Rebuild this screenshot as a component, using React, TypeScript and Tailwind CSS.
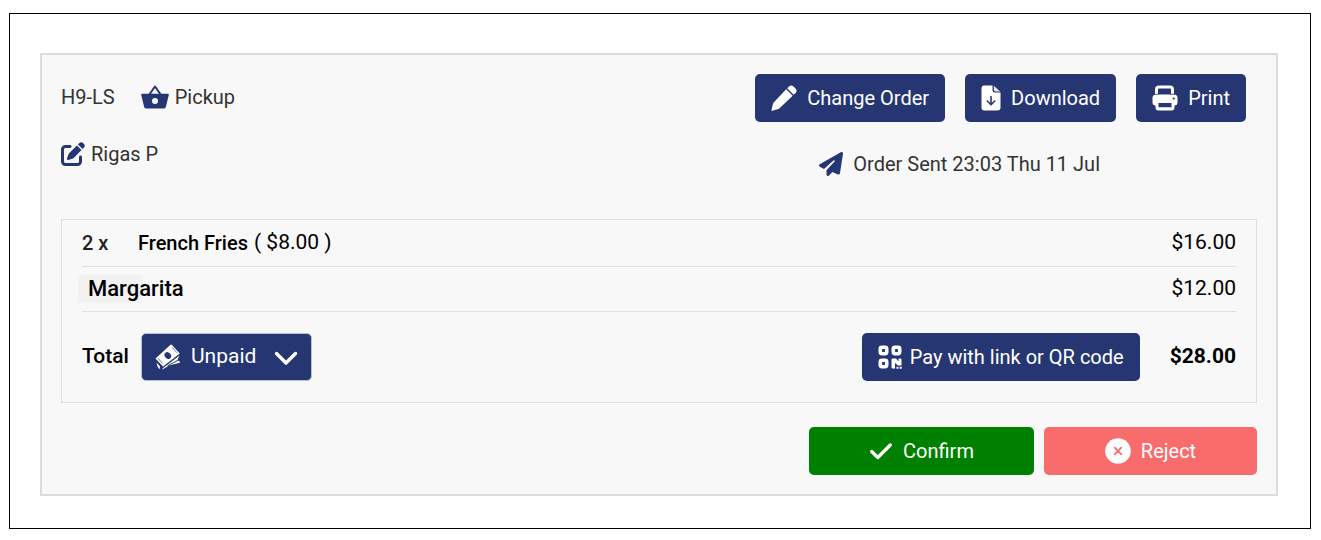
import type { ButtonHTMLAttributes } from "react";
import { FaPaperPlane, FaPenToSquare } from "react-icons/fa6";

function ActionButton({ className = "", ...rest }: ButtonHTMLAttributes<HTMLButtonElement>) {
  return (
    <button
      type="button"
      className={`flex h-12 items-center rounded-[5px] ${className}`}
      {...rest}
    />
  );
}

function BasketIcon() {
  return (
    <svg viewBox="0 0 28 24" className="h-6 w-7" aria-hidden="true">
      <path fill="none" stroke="#263672" strokeWidth="2" strokeLinejoin="round" d="M8 10 14 1.500 20 10" />
      <path
        fill="#263672"
        fillRule="evenodd"
        d="M1.200 8.700h25.600q1.200 0 1 1.200l-3 12q-.4 1.600-2 1.600H5.200q-1.600 0-2-1.600l-3-12q-.2-1.200 1-1.200ZM14 13.100a3 3 0 1 0 0 6 3 3 0 0 0 0-6Z"
      />
    </svg>
  );
}

function PencilIcon() {
  return (
    <svg viewBox="0 0 26 26" className="size-[26px]" aria-hidden="true">
      <path fill="#fff" d="M15.200 4.300 21.700 10.800 8.500 23.200Q8 23.700 7.300 23.900L1.400 25.700Q.2 26 .5 24.700L2 18.700Q2.200 18 2.700 17.500Z" />
      <path fill="#fff" d="M16.200 3.300 18 1.500Q20.200-.4 22.400 1.500L24.500 3.600Q26.600 5.900 24.600 8L22.700 9.800Z" />
    </svg>
  );
}

function DownloadIcon() {
  return (
    <svg viewBox="0 0 20 26" className="h-[26px] w-5" aria-hidden="true">
      <path fill="#fff" d="M3 .5h8.500V5q0 2.500 2.500 2.500h5.500V22.500q0 3-3 3H3.500q-3 0-3-3V3.500q0-3 2.500-3Z" />
      <path fill="#e9e4f0" d="M12.800.8 19.200 6.400H14.500q-1.700 0-1.700-1.700Z" />
      <path fill="none" stroke="#263672" strokeWidth="1.600" strokeLinecap="round" strokeLinejoin="round" d="M10 11.500v8M6.300 16 10 19.700 13.700 16" />
    </svg>
  );
}

function PrintIcon() {
  return (
    <svg viewBox="0 0 26 26" className="size-[26px]" aria-hidden="true">
      <path fill="none" stroke="#fff" strokeWidth="3" d="M4.500 10V4.500q0-2.500 2.500-2.500h11q2.500 0 2.500 2.500V10" />
      <path
        fill="#fff"
        fillRule="evenodd"
        d="M4 9.500h18q3.500 0 3.500 3.500v4.500q0 3-3 3v2q0 3-3 3h-13q-3 0-3-3v-2q-3 0-3-3V13q0-3.500 3.500-3.500ZM6.500 18v4.200h13V18ZM21.700 12.500a1.100 1.100 0 1 0 0 2.200 1.100 1.100 0 0 0 0-2.200Z"
      />
      <path stroke="#263672" strokeWidth=".8" d="M2.500 9.300h4M18.500 9.300h4" />
    </svg>
  );
}

function CashIcon() {
  return (
    <svg viewBox="0 0 26 26" className="size-[26px]" aria-hidden="true">
      <path fill="#fff" d="M.5 14.500 15.500.8Q16.300.2 17 1L24.800 9.500 8 22.500Z" />
      <path fill="#fff" d="M1.500 18.500 5 22.500 4.500 25.500 2.500 22.500ZM7.500 24.500 24.500 11.500 22.500 15.500 25.500 18.500 14 21.500 7.500 25.500Z" />
      <path stroke="#263672" strokeWidth="1" d="M12.500 21.800 24 15.800" />
      <ellipse cx="12.800" cy="11.500" rx="3" ry="3.600" transform="rotate(-42 12.800 11.500)" fill="#263672" />
      <path fill="none" stroke="#263672" strokeWidth=".7" d="M3 14.200 7.500 19.500M17.200 3.500 22 8.800" />
    </svg>
  );
}

function QrIcon() {
  return (
    <svg viewBox="0 0 24 24" className="size-6" aria-hidden="true">
      <g fill="none" stroke="#fff" strokeWidth="3.600">
        <rect x="2.300" y="2.300" width="6.400" height="6.400" rx="1.600" />
        <rect x="15.300" y="2.300" width="6.400" height="6.400" rx="1.600" />
        <rect x="2.300" y="15.300" width="6.400" height="6.400" rx="1.600" />
      </g>
      <path fill="#fff" d="M13.500 14.500q0-1 1-1h3.500l2.500 3v-3h2q1 0 1 1v6h-3.500l-3-2.500v5.500h-2.500q-1 0-1-1ZM18.500 21.700h2v2h-2ZM21.700 21.700h2v2h-2Z" />
    </svg>
  );
}

function ChevronIcon() {
  return (
    <svg viewBox="0 0 24 24" className="ml-2 size-6" aria-hidden="true">
      <path fill="none" stroke="#fff" strokeWidth="3.400" strokeLinecap="round" strokeLinejoin="round" d="M2.500 8.500 12 18 21.500 8.500" />
    </svg>
  );
}

function CheckIcon() {
  return (
    <svg viewBox="0 0 24 24" className="size-6" aria-hidden="true">
      <path fill="none" stroke="#fff" strokeWidth="3.300" strokeLinecap="round" strokeLinejoin="round" d="M2.700 12.500 8.800 18.500 21.300 6" />
    </svg>
  );
}

function RejectIcon() {
  return (
    <svg viewBox="0 0 26 26" className="size-[26px]" aria-hidden="true">
      <circle cx="13" cy="13" r="12.800" fill="#fff" />
      <path stroke="#f86c6b" strokeWidth="1.700" strokeLinecap="round" d="m9.700 9.700 6.600 6.600m0-6.600-6.600 6.600" />
    </svg>
  );
}

export default function App() {
  return (
    <div className="bg-white pt-[13px] pr-[10px] pb-[11px] pl-[9px] font-['Roboto',sans-serif] text-xl text-black">
      <main className="border border-black pt-[39px] pr-8 pb-8 pl-[30px]">
        <article className="border-2 border-[#dcdcde] bg-[#f8f8f8] p-[19px]">
          <header className="flex items-start justify-between pr-[11px] text-[#333]">
            <div className="flex flex-col gap-[27px] pt-2">
              <div className="flex items-center gap-[26px] leading-[30px]">
                <span>H9-LS</span>
                <span className="flex items-center gap-[6px]">
                  <BasketIcon />
                  Pickup
                </span>
              </div>
              <div className="flex items-center gap-[6px] leading-[30px]">
                <FaPenToSquare className="size-6 text-[#263672]" />
                Rigas P
              </div>
            </div>
            <div>
              <div className="flex gap-5">
                <ActionButton className="gap-[10px] bg-[#263672] px-4 text-xl text-white">
                  <PencilIcon />
                  Change Order
                </ActionButton>
                <ActionButton className="gap-[10px] bg-[#263672] px-4 text-xl text-white">
                  <DownloadIcon />
                  Download
                </ActionButton>
                <ActionButton className="gap-[10px] bg-[#263672] px-4 text-xl text-white">
                  <PrintIcon />
                  Print
                </ActionButton>
              </div>
              <div className="mt-[27px] flex items-center gap-[10px] pl-16 leading-[30px]">
                <FaPaperPlane className="size-6 text-[#263672]" />
                Order Sent 23:03 Thu 11 Jul
              </div>
            </div>
          </header>

          <section className="mt-10 border border-[#dfdfdf] px-5">
            <div className="flex h-[47px] items-center justify-between border-b border-[#dfdfdf]">
              <div className="flex items-center">
                <span className="w-14 font-medium text-[#222]">2 x</span>
                <span className="font-medium">French Fries</span>
                <span className="ml-[6px] text-[21px]">( $8.00 )</span>
              </div>
              <span className="text-[21px]">$16.00</span>
            </div>
            <div className="flex h-[45px] items-center justify-between border-b border-[#dfdfdf]">
              <span className="-ml-1 bg-linear-to-r from-[#f2f2f2] from-60% to-transparent to-60% pl-[10px] text-[22px] leading-7 font-medium">
                Margarita
              </span>
              <span className="text-[21px]">$12.00</span>
            </div>
            <div className="flex items-center justify-between py-[21px]">
              <div className="flex items-center gap-3">
                <span className="text-[21px] font-medium">Total</span>
                <ActionButton
                  aria-haspopup="listbox"
                  className="gap-[10px] border border-[#b9bfd4] bg-[#263672] px-[13px] text-[21px] text-white"
                >
                  <CashIcon />
                  Unpaid
                  <ChevronIcon />
                </ActionButton>
              </div>
              <div className="flex items-center gap-[30px]">
                <ActionButton className="gap-2 bg-[#263672] px-4 text-xl text-white">
                  <QrIcon />
                  Pay with link or QR code
                </ActionButton>
                <strong className="text-[21px] font-bold">$28.00</strong>
              </div>
            </div>
          </section>

          <footer className="mt-6 flex justify-end gap-[10px]">
            <ActionButton className="w-[225px] justify-center gap-[10px] bg-[#008000] text-xl text-white">
              <CheckIcon />
              Confirm
            </ActionButton>
            <ActionButton className="w-[213px] justify-center gap-[10px] bg-[#f86c6b] text-xl text-white">
              <RejectIcon />
              Reject
            </ActionButton>
          </footer>
        </article>
      </main>
    </div>
  );
}
